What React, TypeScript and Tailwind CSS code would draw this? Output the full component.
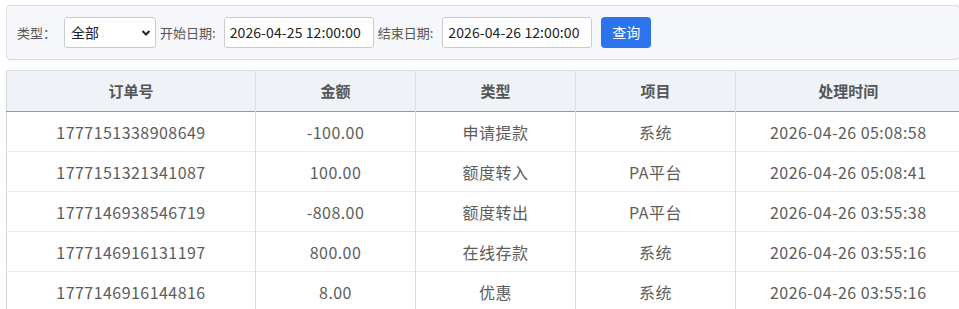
import React from 'react';

interface Row {
  orderNo: string;
  amount: string;
  type: string;
  item: string;
  time: string;
}

const rows: Row[] = [
  { orderNo: '1777151338908649', amount: '-100.00', type: '申请提款', item: '系统', time: '2026-04-26 05:08:58' },
  { orderNo: '1777151321341087', amount: '100.00', type: '额度转入', item: 'PA平台', time: '2026-04-26 05:08:41' },
  { orderNo: '1777146938546719', amount: '-808.00', type: '额度转出', item: 'PA平台', time: '2026-04-26 03:55:38' },
  { orderNo: '1777146916131197', amount: '800.00', type: '在线存款', item: '系统', time: '2026-04-26 03:55:16' },
  { orderNo: '1777146916144816', amount: '8.00', type: '优惠', item: '系统', time: '2026-04-26 03:55:16' },
];

const headers = [
  { label: '订单号', w: 'w-[249px]' },
  { label: '金额', w: 'w-[160px]' },
  { label: '类型', w: 'w-[160px]' },
  { label: '项目', w: 'w-[160px]' },
  { label: '处理时间', w: 'w-[225px]' },
];

const App: React.FC = () => {
  return (
    <div className="w-[959px] h-[309px] overflow-hidden bg-white font-['Noto_Sans_CJK_SC',sans-serif]">
      <div className="w-[954px] ml-[6px] pt-[5px]">
        {/* Filter bar */}
        <div className="flex items-center h-[55px] pl-[10px] bg-[#f5f7fa] border border-[#d8dce2] rounded-[4px] text-[13px] text-[#555]">
          <span className="mr-[8px]">类型：</span>
          <div className="relative w-[92px] h-[31px] flex items-center bg-white border border-[#c8ccd2] rounded-[3px] pl-[6px] text-[14px] text-[#222]">
            全部
            <svg className="absolute right-[4px] top-[11px]" width="10" height="8" viewBox="0 0 10 8">
              <path d="M1.5 2 L5 5.5 L8.5 2" fill="none" stroke="#222" strokeWidth="2" />
            </svg>
          </div>
          <span className="ml-[4px] mr-[8px]">开始日期:</span>
          <div className="w-[150px] h-[31px] flex items-center bg-white border border-[#c8ccd2] rounded-[3px] pl-[5px] text-[14px] text-[#222] tracking-[0.1px]">
            2026-04-25 12:00:00
          </div>
          <span className="ml-[4px] mr-[9px]">结束日期:</span>
          <div className="w-[150px] h-[31px] flex items-center bg-white border border-[#c8ccd2] rounded-[3px] pl-[5px] text-[14px] text-[#222] tracking-[0.1px]">
            2026-04-26 12:00:00
          </div>
          <button className="ml-[9px] w-[50px] h-[31px] bg-[#2b74ee] text-white text-[14px] rounded-[4px]">
            查询
          </button>
        </div>

        {/* Table */}
        <table className="mt-[10px] w-[954px] table-fixed border-collapse border-l border-t border-l-[#cfd5db] border-t-[#d8dce2]">
          <thead>
            <tr className="bg-[#eff3f7] h-[41px] border-b border-b-[#9a9a9a]">
              {headers.map((h, i) => (
                <th
                  key={h.label}
                  className={`${h.w} text-[15px] font-bold text-[#555] text-center ${i < headers.length - 1 ? 'border-r border-r-[#efd6d6]' : ''}`}
                >
                  {h.label}
                </th>
              ))}
            </tr>
          </thead>
          <tbody>
            {rows.map((r) => (
              <tr key={r.orderNo} className="h-[40px] border-b border-b-[#ececec] text-[16px] text-[#5c5c5c] text-center tracking-[0.45px]">
                <td className="border-r border-r-[#efd6d6]">{r.orderNo}</td>
                <td className="border-r border-r-[#efd6d6]">{r.amount}</td>
                <td className="border-r border-r-[#efd6d6]">{r.type}</td>
                <td className="border-r border-r-[#efd6d6]">{r.item}</td>
                <td>{r.time}</td>
              </tr>
            ))}
          </tbody>
        </table>
      </div>
    </div>
  );
};

export default App;
